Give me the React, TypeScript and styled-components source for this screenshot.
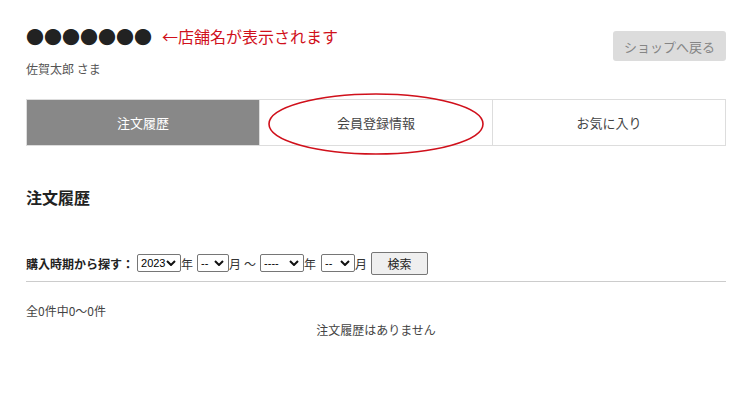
import React from 'react';
import styled, { createGlobalStyle } from 'styled-components';

const GlobalStyle = createGlobalStyle`
  body {
    margin: 0;
    background: #fff;
    font-family: "Noto Sans CJK JP", "Noto Sans", sans-serif;
    color: #333;
  }
`;

const chevron =
  "url(\"data:image/svg+xml,%3Csvg xmlns='http://www.w3.org/2000/svg' width='10' height='6'%3E%3Cpath d='M1 1l4 4 4-4' fill='none' stroke='%23111' stroke-width='2'/%3E%3C/svg%3E\")";

const Page = styled.div`
  width: 700px;
  margin-left: 26px;
  padding-top: 24px;
  position: relative;
`;

const Header = styled.div`
  display: flex;
  justify-content: space-between;
  align-items: flex-start;
`;

const TitleLine = styled.div`
  display: flex;
  align-items: center;
  height: 24px;
`;

const Dots = styled.span`
  font-size: 18px;
  color: #222;
  line-height: 24px;
`;

const Note = styled.span`
  margin-left: 10px;
  font-size: 16px;
  color: #d0101b;
  line-height: 24px;
`;

const UserName = styled.div`
  margin-top: 12px;
  font-size: 12px;
  color: #555;
  line-height: 18px;
`;

const BackButton = styled.button`
  margin-top: 7px;
  width: 113px;
  height: 30px;
  border: none;
  border-radius: 3px;
  background: #dcdcdc;
  color: #858585;
  font-family: inherit;
  font-size: 13px;
`;

const Tabs = styled.div`
  display: grid;
  grid-template-columns: 232px 233px 233px;
  margin-top: 21px;
  border: 1px solid #ddd;
  position: relative;
`;

const Tab = styled.div<{ $active?: boolean }>`
  height: 45px;
  display: flex;
  align-items: center;
  justify-content: center;
  font-size: 13px;
  background: ${(p) => (p.$active ? '#888' : '#fff')};
  color: ${(p) => (p.$active ? '#fff' : '#444')};
  & + & {
    border-left: 1px solid #ddd;
  }
`;

const Circle = styled.svg`
  position: absolute;
  left: 241px;
  top: -7px;
  overflow: visible;
  pointer-events: none;
`;

const Heading = styled.h2`
  margin: 39px 0 0;
  font-size: 16px;
  font-weight: bold;
  color: #222;
  line-height: 24px;
`;

const SearchRow = styled.div`
  display: flex;
  align-items: center;
  margin-top: 42px;
  font-size: 12px;
  color: #333;
  height: 24px;
`;

const SearchLabel = styled.span`
  font-weight: bold;
  color: #222;
  margin-right: 3px;
`;

const Select = styled.select<{ $w: number }>`
  appearance: none;
  width: ${(p) => p.$w}px;
  height: 18px;
  padding: 0 0 0 3px;
  border: 1px solid #767676;
  border-radius: 2px;
  background: #fff ${chevron} no-repeat right 4px center;
  font-family: "Liberation Sans", Arial, sans-serif;
  font-size: 11px;
  color: #000;
`;

const Unit = styled.span<{ $l?: number; $r?: number }>`
  margin: 0 ${(p) => p.$r ?? 4}px 0 ${(p) => p.$l ?? 0}px;
`;

const SearchButton = styled.button`
  margin-left: 3px;
  width: 57px;
  height: 23px;
  border: 1px solid #767676;
  border-radius: 2px;
  background: #efefef;
  font-family: inherit;
  font-size: 12px;
  color: #222;
`;

const Rule = styled.hr`
  margin: 6px 0 0;
  border: none;
  border-top: 1px solid #ccc;
`;

const Count = styled.div`
  margin-top: 20px;
  font-size: 12px;
  color: #444;
  line-height: 18px;
`;

const Empty = styled.div`
  margin-top: 1px;
  text-align: center;
  font-size: 12px;
  color: #444;
  line-height: 18px;
`;

export default function App() {
  return (
    <>
      <GlobalStyle />
      <Page>
        <Header>
          <div>
            <TitleLine>
              <Dots>●●●●●●●</Dots>
              <Note>←店舗名が表示されます</Note>
            </TitleLine>
            <UserName>佐賀太郎 さま</UserName>
          </div>
          <BackButton>ショップへ戻る</BackButton>
        </Header>
        <Tabs>
          <Tab $active>注文履歴</Tab>
          <Tab>会員登録情報</Tab>
          <Tab>お気に入り</Tab>
          <Circle width="216" height="62">
            <ellipse cx="108" cy="31" rx="107" ry="30" fill="none" stroke="#d0101b" strokeWidth="1.6" />
          </Circle>
        </Tabs>
        <Heading>注文履歴</Heading>
        <SearchRow>
          <SearchLabel>購入時期から探す：</SearchLabel>
          <Select $w={44} defaultValue="2023">
            <option>2023</option>
          </Select>
          <Unit>年</Unit>
          <Select $w={32}>
            <option>--</option>
          </Select>
          <Unit $r={3}>月</Unit>
          <Unit $r={4}>～</Unit>
          <Select $w={44}>
            <option>----</option>
          </Select>
          <Unit $r={5}>年</Unit>
          <Select $w={34}>
            <option>--</option>
          </Select>
          <Unit $r={1}>月</Unit>
          <SearchButton>検索</SearchButton>
        </SearchRow>
        <Rule />
        <Count>全0件中0〜0件</Count>
        <Empty>注文履歴はありません</Empty>
      </Page>
    </>
  );
}
